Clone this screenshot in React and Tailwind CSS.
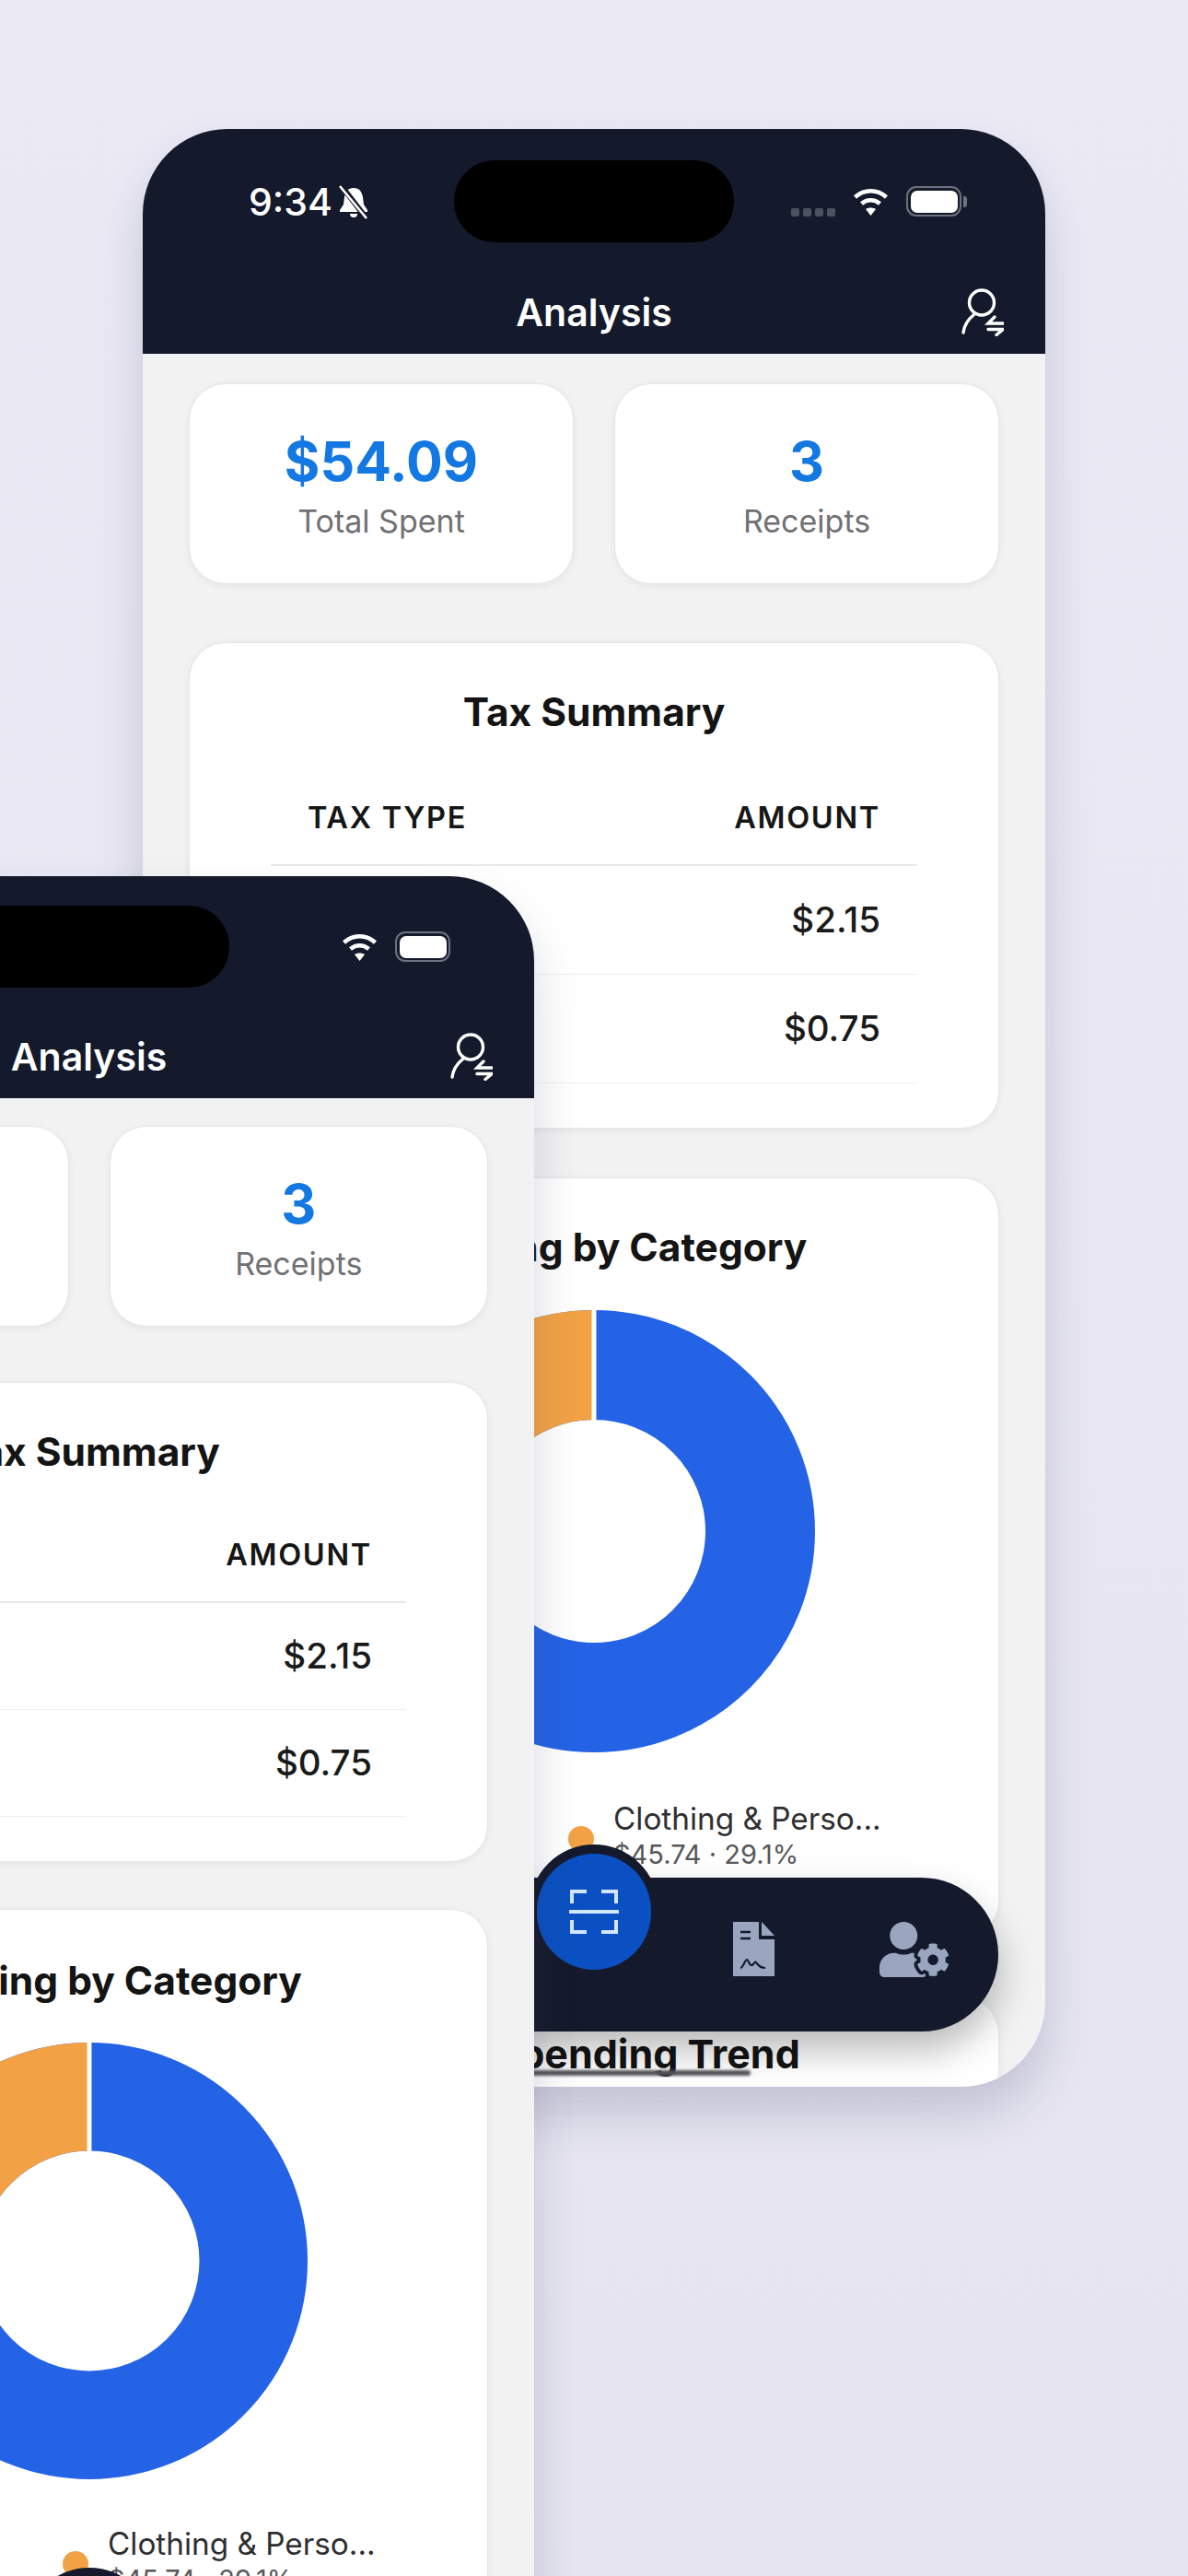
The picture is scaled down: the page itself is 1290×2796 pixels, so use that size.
import React from "react";
import { FaUserCog } from "react-icons/fa";

const BACK = {
  front: false,
  phone: "left-[155px] top-[140px] w-[980px] h-[2125px] z-0",
  header: "h-[244px]",
  statusPad: "pt-[34px]",
  rightPad: "pr-[85px]",
  leftPad: "pl-[115px]",
  titleRow: "pt-[30px] h-[121px]",
  content: "pt-[32px] gap-y-[63px]",
  taxCard: "h-[528px]",
  tableHead: "h-[108px] pt-[6px] px-[40px]",
  tableRow: "h-[118px] px-[40px]",
  donutCard: "h-[826px] -mt-[10px]",
  cardTitle: "pt-[45px]",
  donutWrap: "pt-[38px]",
  donut: "w-[480px] h-[480px]",
  legend: "mt-[52px] pl-[411px]",
  nav: "top-[1898px]",
};

const FRONT = {
  front: true,
  phone: "left-[-387px] top-[951px] w-[967px] h-[2100px] z-10",
  header: "h-[241px]",
  statusPad: "pt-[32px]",
  rightPad: "pr-[91px]",
  leftPad: "pl-[115px]",
  titleRow: "pt-[30px] h-[120px]",
  content: "pt-[30px] gap-y-[60px]",
  taxCard: "h-[521px]",
  tableHead: "h-[105px] pt-[3px] px-[37px]",
  tableRow: "h-[116px] px-[37px]",
  donutCard: "h-[800px] -mt-[9px]",
  cardTitle: "pt-[47px]",
  donutWrap: "pt-[37px]",
  donut: "w-[474px] h-[474px]",
  legend: "mt-[50px] pl-[404px]",
  nav: "top-[1872px]",
};

function BellOff() {
  return (
    <svg viewBox="0 0 34 38" className="w-[34px] h-[38px]">
      <path d="M17 4c-6 0-9 4-10 10l-1 8-4 6v2h30v-2l-4-6-1-8C26 8 23 4 17 4z" fill="#fff" />
      <path d="M13 32a4 4 0 0 0 8 0z" fill="#fff" />
      <path d="M3 1l28 36" stroke="#141a2b" strokeWidth="6" />
      <path d="M2 2l29 35" stroke="#fff" strokeWidth="2.6" />
    </svg>
  );
}

function Wifi() {
  return (
    <svg viewBox="0 0 40 31" className="w-[41px] h-[31px]" fill="none" stroke="#fff" strokeWidth="4.6">
      <path d="M3 11C13 2 27 2 37 11" />
      <path d="M10 18c6-5 14-5 20 0" />
      <path d="M20 31l-5.5-7c3-2 8-2 11 0z" fill="#fff" stroke="none" />
    </svg>
  );
}

function Battery({ cap }) {
  return (
    <div className="flex items-center gap-[2px]">
      <div className="w-[60px] h-[33px] rounded-[11px] border-[2.5px] border-[#6d7280] p-[2.5px]">
        <div className="w-full h-full rounded-[7px] bg-white" />
      </div>
      {cap && <div className="w-[4px] h-[12px] rounded-r-[3px] bg-[#6d7280]" />}
    </div>
  );
}

function PersonSwap() {
  return (
    <svg viewBox="0 0 46 52" className="w-[46px] h-[52px]" fill="none" stroke="#fff" strokeWidth="3.4" strokeLinecap="round">
      <circle cx="22" cy="15.5" r="13.5" />
      <path d="M2 48C3 39 8 33 14 28" />
      <path d="M36 31l-7 7H45" />
      <path d="M29 44.5H45l-7 6" />
    </svg>
  );
}

function ScanIcon() {
  return (
    <svg viewBox="0 0 54 48" className="w-[54px] h-[48px]" fill="none" stroke="#d3e6ff" strokeWidth="4">
      <path d="M3 15V2H19" />
      <path d="M35 2H51V15" />
      <path d="M3 33V46H19" />
      <path d="M35 46H51V33" />
      <path d="M0 24H54" />
    </svg>
  );
}

function DocIcon() {
  return (
    <svg viewBox="0 0 45 59" className="w-[45px] h-[59px]">
      <path d="M0 0H28V19H45V59H0Z" fill="#9aa6bf" />
      <path d="M31 0L45 15H31Z" fill="#9aa6bf" />
      <path d="M8 11H19M8 18H19" stroke="#141a2b" strokeWidth="2.6" />
      <path d="M8 50c3 0 5-9 7-9s2 6 5 6 3-5 5-3 3 6 10 6" stroke="#141a2b" strokeWidth="2.2" fill="none" />
    </svg>
  );
}

function Donut({ size }) {
  const inner = 121;
  const a = (255.24 * Math.PI) / 180;
  return (
    <svg viewBox="0 0 480 480" className={size}>
      <g fill="none" strokeWidth="119">
        <circle cx="240" cy="240" r="180.5" stroke="#2463e5" />
        <circle
          cx="240"
          cy="240"
          r="180.5"
          stroke="#f2a245"
          pathLength="1000"
          strokeDasharray="291 709"
          strokeDashoffset="291"
          transform="rotate(-90 240 240)"
        />
      </g>
      <path d="M240 0V121" stroke="#fff" strokeWidth="5" />
      <path
        d={`M${240 + inner * Math.sin(a)} ${240 - inner * Math.cos(a)}L${240 + 240 * Math.sin(a)} ${240 - 240 * Math.cos(a)}`}
        stroke="#fff"
        strokeWidth="5"
      />
    </svg>
  );
}

const card = "bg-white rounded-[40px] border border-[#e6e6e8] shadow-[0_2px_8px_rgba(0,0,0,0.06)]";

function Phone({ v }) {
  return (
    <div className={`absolute overflow-hidden rounded-[92px] bg-[#f2f2f3] shadow-[0_30px_50px_rgba(60,60,100,0.2)] ${v.phone}`}>
      <header className={`bg-[#141a2b] text-white ${v.header}`}>
        <div className={`grid grid-cols-[1fr_304px_1fr] items-center ${v.statusPad}`}>
          <div className={`flex items-center gap-[6px] ${v.leftPad}`}>
            <span className="text-[41px] leading-[50px] font-medium">9:34</span>
            <BellOff />
          </div>
          <div className="h-[89px] rounded-[44px] bg-black" />
          <div className={`flex items-center justify-end gap-[18px] ${v.rightPad}`}>
            {!v.front && (
              <div className="flex gap-[4px] mt-[24px]">
                <i className="w-[9px] h-[9px] rounded-[2px] bg-[#4d5261]" />
                <i className="w-[9px] h-[9px] rounded-[2px] bg-[#4d5261]" />
                <i className="w-[9px] h-[9px] rounded-[2px] bg-[#4d5261]" />
                <i className="w-[9px] h-[9px] rounded-[2px] bg-[#4d5261]" />
              </div>
            )}
            <Wifi />
            <Battery cap={!v.front} />
          </div>
        </div>
        <div className={`grid grid-cols-[1fr_auto_1fr] items-center ${v.titleRow}`}>
          <div />
          <h1 className="text-[41px] leading-[48px] font-semibold">Analysis</h1>
          <div className="justify-self-end pr-[45px]">
            <PersonSwap />
          </div>
        </div>
      </header>

      <main className={`flex flex-col px-[50px] ${v.content}`}>
        <section className="grid grid-cols-2 gap-x-[44px]">
          <div className={`${card} h-[218px] flex flex-col items-center pt-[50px]`}>
            <div className="text-[59px] leading-[68px] font-bold text-[#1478e2]">$54.09</div>
            <div className="mt-[11px] text-[34px] leading-[40px] text-[#717174]">Total Spent</div>
          </div>
          <div className={`${card} h-[218px] flex flex-col items-center pt-[50px]`}>
            <div className="text-[59px] leading-[68px] font-bold text-[#1478e2]">3</div>
            <div className="mt-[11px] text-[34px] leading-[40px] text-[#717174]">Receipts</div>
          </div>
        </section>

        <section className={`${card} px-[88px] ${v.taxCard}`}>
          <h2 className="text-center text-[42.5px] leading-[60px] font-bold text-[#141414] pt-[45px] pb-[49px]">Tax Summary</h2>
          <div className={`flex items-center justify-between -mt-[20px] border-b-2 border-[#e8e8ea] text-[32.5px] font-semibold tracking-[1.7px] text-[#161616] ${v.tableHead}`}>
            <span>TAX TYPE</span>
            <span>AMOUNT</span>
          </div>
          <div className={`flex items-center justify-end border-b border-[#efeff1] text-[38.5px] font-medium text-[#1a1a1a] ${v.tableRow}`}>
            $2.15
          </div>
          <div className={`flex items-center justify-end border-b border-[#efeff1] text-[38.5px] font-medium text-[#1a1a1a] ${v.tableRow}`}>
            $0.75
          </div>
        </section>

        <section className={`${card} ${v.donutCard}`}>
          <h2 className={`text-center text-[42.5px] leading-[60px] font-bold text-[#141414] ${v.cardTitle}`}>Spending by Category</h2>
          <div className={`flex justify-center ${v.donutWrap}`}>
            <Donut size={v.donut} />
          </div>
          <div className={`flex items-center gap-[21px] ${v.legend}`}>
            <span className="w-[28px] h-[28px] rounded-full bg-[#f2a245] mt-[6px]" />
            <div>
              <div className="text-[33.3px] leading-[40px] text-[#2f2f31]">Clothing &amp; Perso...</div>
              <div className="text-[29px] leading-[38px] text-[#58585b]">$45.74 · 29.1%</div>
            </div>
          </div>
        </section>

        <section className={`${card} h-[300px] flex flex-col items-start pt-[36px]`}>
          <h2 className="ml-[330px] text-[43px] leading-[50px] font-bold text-[#141414] whitespace-nowrap">Spending Trend</h2>
          <div className="ml-[274px] w-[335px] h-[6px] -mt-[7px] rounded-full bg-[#55555a] blur-[1.5px]" />
        </section>
      </main>

      <nav className={`absolute left-[51px] right-[51px] h-[167px] rounded-full bg-[#141a2b] shadow-[0_20px_40px_rgba(0,0,0,0.28)] flex justify-end items-start gap-[114px] pt-[48px] pr-[54px] ${v.nav}`}>
        <div className="absolute left-1/2 -translate-x-1/2 -top-[36px] w-[140px] h-[140px] rounded-full bg-[#141a2b] flex justify-center pt-[10px]">
          <div className="w-[124px] h-[126px] rounded-full bg-[#0b50c2] flex items-center justify-center">
            <ScanIcon />
          </div>
        </div>
        <DocIcon />
        <FaUserCog className="w-[75px] h-[60px] text-[#9aa6bf]" />
      </nav>
    </div>
  );
}

export default function App() {
  return (
    <div className="relative w-[1290px] h-[2796px] overflow-hidden bg-linear-to-b from-[#eae9f4] to-[#e5e4f0] font-['Inter',sans-serif]">
      <Phone v={BACK} />
      <Phone v={FRONT} />
    </div>
  );
}
